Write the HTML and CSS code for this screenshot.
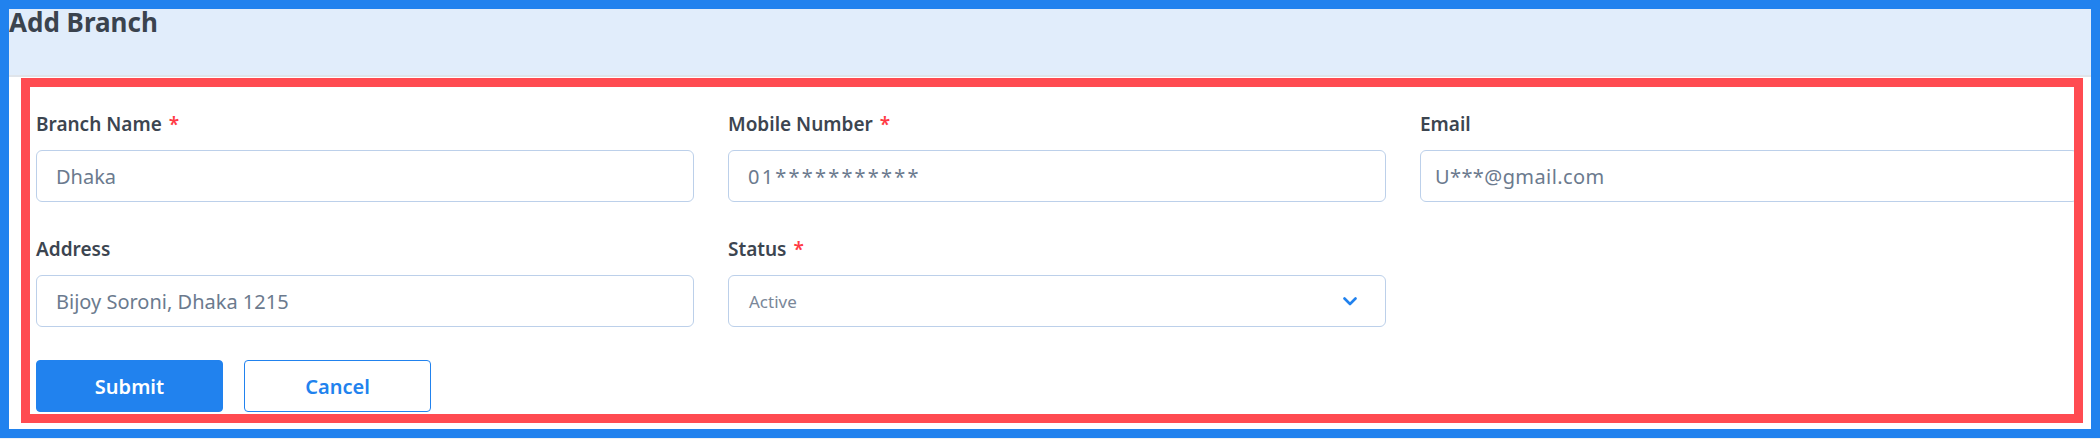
FILE: index.html
```html
<!DOCTYPE html>
<html lang="en">
<head>
    <meta charset="UTF-8">
    <meta name="viewport" content="width=device-width, initial-scale=1.0">
    <title>Add Branch</title>
    <link rel="stylesheet" href="styles.css">
</head>
<body>
    <div class="frame">
        <div class="page-header">
            <h1>Add Branch</h1>
        </div>
        <div class="card">
            <form class="form-box">
                <div class="form-grid">
                    <div class="field">
                        <label for="branchName">Branch Name <span class="req">*</span></label>
                        <input type="text" id="branchName" value="Dhaka">
                    </div>
                    <div class="field">
                        <label for="mobile">Mobile Number <span class="req">*</span></label>
                        <input type="text" id="mobile" class="mobile-input" value="01***********">
                    </div>
                    <div class="field">
                        <label for="email">Email</label>
                        <input type="text" id="email" class="email-input" value="U***@gmail.com">
                    </div>
                    <div class="field">
                        <label for="address">Address</label>
                        <input type="text" id="address" value="Bijoy Soroni, Dhaka 1215">
                    </div>
                    <div class="field">
                        <label>Status <span class="req">*</span></label>
                        <div class="select-box">
                            <span>Active</span>
                            <svg width="14" height="9" viewBox="0 0 14 9">
                                <polyline points="1.5,1.5 7,7 12.5,1.5" fill="none" stroke="#2182ee" stroke-width="2.6" stroke-linecap="round" stroke-linejoin="round"/>
                            </svg>
                        </div>
                    </div>
                </div>
                <div class="button-container">
                    <button type="button" class="btn btn-primary">Submit</button>
                    <button type="button" class="btn btn-outline">Cancel</button>
                </div>
            </form>
        </div>
    </div>
</body>
</html>
```

FILE: styles.css
```css
body {
    margin: 0;
    padding: 0;
    background-color: #eef1f5;
    font-family: "Noto Sans", "Open Sans", sans-serif;
}
.frame {
    box-sizing: border-box;
    width: 2100px;
    height: 438px;
    border: 9px solid #2182ee;
    background-color: #ffffff;
    display: flex;
    flex-direction: column;
    overflow: hidden;
}
.page-header {
    height: 66px;
    background-color: #e1edfb;
    border-bottom: 2px solid #dfe4ea;
}
.page-header h1 {
    margin: 0;
    font-size: 26px;
    line-height: 26px;
    font-weight: 700;
    color: #3a434e;
}
.card {
    flex: 1;
    background-color: #ffffff;
    border-top-left-radius: 4px;
    padding: 1px 8px 6px 12px;
    display: flex;
}
.form-box {
    flex: 1;
    border: 9px solid #ff4b51;
    padding: 24px 0 0 6px;
    overflow: hidden;
}
.form-grid {
    display: grid;
    grid-template-columns: repeat(3, 658px);
    column-gap: 34px;
    row-gap: 34px;
}
.field label {
    display: block;
    font-size: 19px;
    line-height: 26px;
    font-weight: 600;
    color: #3c4550;
    margin-bottom: 13px;
}
.req {
    color: #ff3b45;
    margin-left: 2px;
}
.field input,
.select-box {
    box-sizing: border-box;
    width: 100%;
    height: 52px;
    border: 1.5px solid #bcd0ea;
    border-radius: 6px;
    background-color: #ffffff;
    font-family: "Noto Sans", "Open Sans", sans-serif;
    font-size: 20px;
    color: #6b7a8e;
    padding: 0 19px;
    outline: none;
}
.mobile-input {
    letter-spacing: 2.2px;
}
.email-input {
    padding-left: 14px !important;
    letter-spacing: 0.4px;
}
.select-box {
    display: flex;
    align-items: center;
    justify-content: space-between;
    font-size: 17px;
    color: #7a8799;
    padding: 0 28px 0 20px;
}
.button-container {
    display: flex;
    gap: 21px;
    margin-top: 33px;
}
.btn {
    box-sizing: border-box;
    width: 187px;
    height: 52px;
    border-radius: 4px;
    font-family: "Noto Sans", "Open Sans", sans-serif;
    font-size: 20px;
    font-weight: 600;
    cursor: pointer;
}
.btn-primary {
    background-color: #2182ee;
    border: 1.5px solid #2182ee;
    color: #ffffff;
}
.btn-outline {
    background-color: #ffffff;
    border: 1.5px solid #2182ee;
    color: #2182ee;
}
```
